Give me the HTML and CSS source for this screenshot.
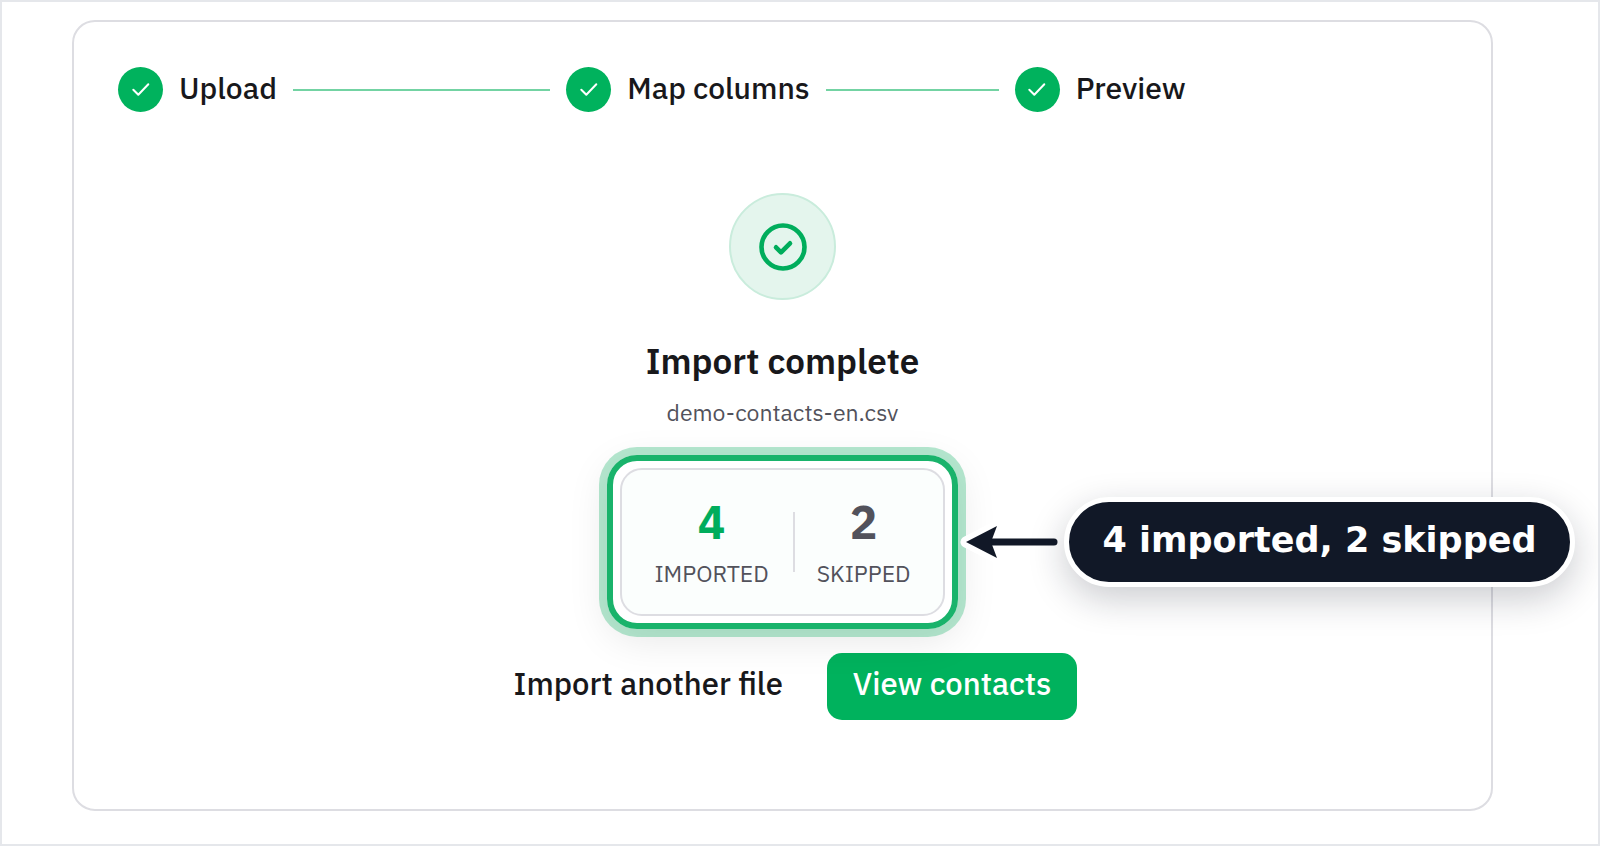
FILE: index.html
```html
<!DOCTYPE html>
<html lang="en">
<head>
  <meta charset="UTF-8" />
  <meta name="viewport" content="width=device-width, initial-scale=1" />
  <title>Import contacts</title>
  <link rel="stylesheet" href="styles.css">
</head>
<body>

<main class="card">
  <!-- Steps -->
  <ol class="steps">
    <li class="step">
      <span class="step-icon">
        <svg width="20" height="16" viewBox="0 0 20 16"><path d="M2.3 7.7l5 5L17.3 2.3" /></svg>
      </span>
      <span class="step-name">Upload</span>
      <span class="step-line"></span>
    </li>
    <li class="step">
      <span class="step-icon">
        <svg width="20" height="16" viewBox="0 0 20 16"><path d="M2.3 7.7l5 5L17.3 2.3" /></svg>
      </span>
      <span class="step-name">Map columns</span>
      <span class="step-line"></span>
    </li>
    <li class="step">
      <span class="step-icon">
        <svg width="20" height="16" viewBox="0 0 20 16"><path d="M2.3 7.7l5 5L17.3 2.3" /></svg>
      </span>
      <span class="step-name">Preview</span>
    </li>
  </ol>

  <!-- Result -->
  <section class="result">
    <div class="badge">
      <svg width="50" height="50" viewBox="0 0 50 50">
        <circle cx="25" cy="25" r="21.5" />
        <path d="M18 25.3l5 5 9-9" />
      </svg>
    </div>
    <h1>Import complete</h1>
    <p class="filename">demo-contacts-en.csv</p>

    <div class="highlight">
      <dl class="stats">
        <div class="stat imported">
          <dt>IMPORTED</dt>
          <dd>4</dd>
        </div>
        <div class="stat skipped">
          <dt>SKIPPED</dt>
          <dd>2</dd>
        </div>
      </dl>
      <div class="callout">
        <svg width="108" height="48" viewBox="0 0 108 48">
          <g class="outline">
            <path d="M34 24h65" />
            <path d="M8 24L39 8l-6 16 6 16z" />
          </g>
          <path class="shaft" d="M34 24h62" />
          <path class="head" d="M8 24L39 8l-6 16 6 16z" />
        </svg>
        <span class="callout-text">4 imported, 2 skipped</span>
      </div>
    </div>

    <div class="actions">
      <button type="button" class="btn">Import another file</button>
      <button type="button" class="btn primary">View contacts</button>
    </div>
  </section>
</main>

</body>
</html>
```
FILE: styles.css
```css
* {
  box-sizing: border-box;
}

body {
  margin: 0;
  min-height: 100vh;
  padding: 18px 105px 33px 70px;
  border: 2px solid #e5e7eb;
  background: #fff;
  color: #18181b;
  font-family: "IBM Plex Sans", Inter, sans-serif;
  overflow-x: hidden;
}

.card {
  padding: 45px 44px 89px;
  border: 2px solid #dddde2;
  border-radius: 23px;
}

.steps {
  display: grid;
  grid-template-columns: repeat(3, 1fr);
  gap: 16px;
  margin: 0;
  padding: 0;
  list-style: none;
  font-size: 30px;
  font-weight: 500;
}

.step {
  display: flex;
  align-items: center;
  gap: 16px;
  white-space: nowrap;
}

.step-icon {
  display: flex;
  align-items: center;
  justify-content: center;
  width: 45px;
  height: 45px;
  border-radius: 50%;
  background: #00b25d;
}

.step-icon path {
  fill: none;
  stroke: #fff;
  stroke-width: 2;
  stroke-linecap: round;
  stroke-linejoin: round;
}

.step-name {
  padding-bottom: 4px;
  line-height: 40px;
}

.step-line {
  flex: 1;
  height: 2px;
  background: #73d3a3;
}

.result {
  display: flex;
  flex-direction: column;
  align-items: center;
  margin-top: 81px;
}

.badge {
  display: flex;
  align-items: center;
  justify-content: center;
  width: 107px;
  height: 107px;
  border: 2px solid #c9ecdc;
  border-radius: 50%;
  background: #e4f5ed;
}

.badge circle,
.badge path {
  fill: none;
  stroke: #00ad5c;
  stroke-width: 4.6;
  stroke-linecap: round;
  stroke-linejoin: round;
}

h1 {
  margin: 39px 0 0;
  font-size: 35px;
  font-weight: 600;
  line-height: 44px;
}

.filename {
  margin: 13px 0 0;
  color: #52525b;
  font-size: 23px;
  line-height: 32px;
}

/* ring around the numbers */
.highlight {
  position: relative;
  margin-top: 27px;
  padding: 7px;
  border: 6px solid #19b36b;
  border-radius: 30px;
  box-shadow: 0 0 0 8px rgba(25, 179, 107, 0.32), 0 10px 40px rgba(0, 0, 0, 0.1);
}

.stats {
  display: flex;
  align-items: center;
  margin: 0;
  padding: 26px 8px 25px;
  border: 2px solid #dddde2;
  border-radius: 22px;
  background: #fbfefd;
}

.stat {
  display: flex;
  flex-direction: column-reverse;
  align-items: center;
  padding: 0 24px;
}

.stat dt {
  color: #52525b;
  font-size: 23px;
  line-height: 32px;
}

.stat dd {
  margin: 0 0 9px;
  font-size: 46px;
  font-weight: 700;
  line-height: 52px;
}

.imported dd {
  color: #00ad5c;
}

.skipped {
  position: relative;
}

.skipped::before {
  content: "";
  position: absolute;
  left: 0;
  top: 16px;
  width: 2px;
  height: 60px;
  background: #dddde2;
}

.skipped dd {
  color: #52525b;
}

.callout {
  position: absolute;
  left: 100%;
  top: 50%;
  display: flex;
  align-items: center;
  margin-left: 6px;
  transform: translateY(-50%);
}

.callout svg {
  flex: none;
  margin-right: -2px;
}

.callout .outline {
  fill: #fff;
  stroke: #fff;
  stroke-width: 11;
  stroke-linecap: round;
  stroke-linejoin: round;
}

.callout .shaft {
  stroke: #111827;
  stroke-width: 7;
  stroke-linecap: round;
}

.callout .head {
  fill: #111827;
}

.callout-text {
  padding: 16px 34px 20px;
  border: 5px solid #fff;
  border-radius: 46px;
  background: #111827;
  box-shadow: 0 12px 36px rgba(17, 24, 39, 0.22);
  color: #fff;
  font-family: "DejaVu Sans", sans-serif;
  font-size: 35px;
  font-weight: 700;
  line-height: 44px;
  white-space: nowrap;
}

.actions {
  display: flex;
  gap: 18px;
  margin-top: 24px;
}

.btn {
  height: 67px;
  padding: 0 26px 6px;
  border: none;
  border-radius: 15px;
  background: transparent;
  color: #18181b;
  font-family: inherit;
  font-size: 31px;
  font-weight: 500;
  cursor: pointer;
}

.btn.primary {
  background: #00b25d;
  color: #fff;
}
```
